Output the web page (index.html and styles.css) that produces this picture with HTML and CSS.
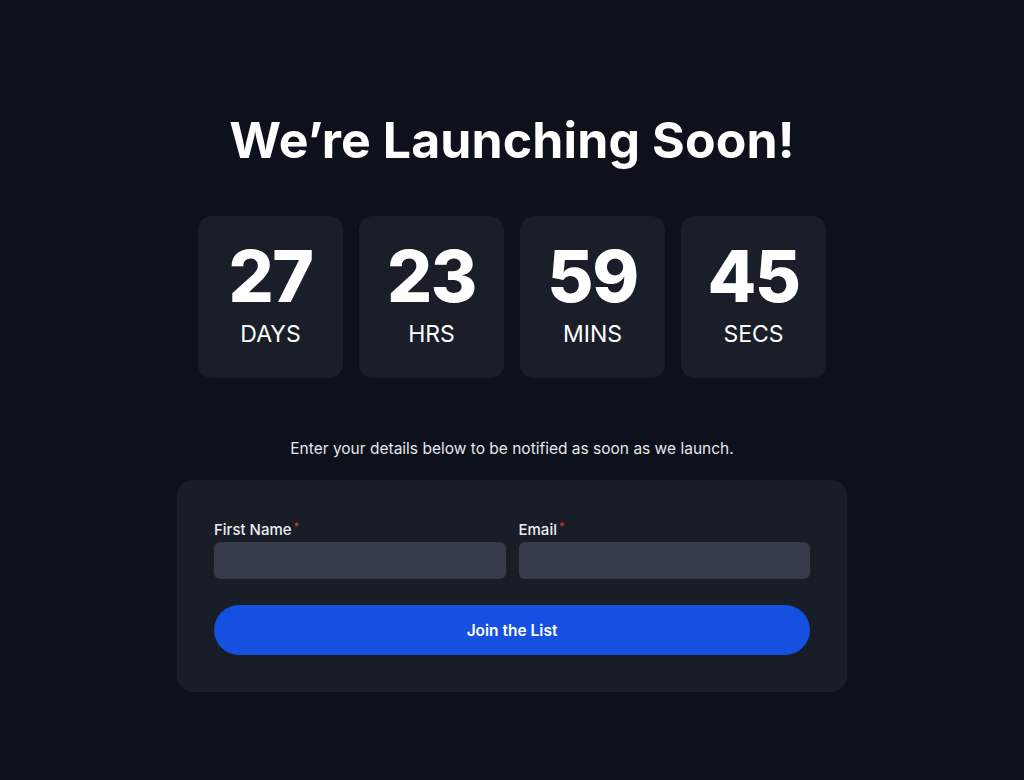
FILE: index.html
```html
<!DOCTYPE html>
<html lang="en">
<head>
<meta charset="utf-8">
<title>We're Launching Soon!</title>
<link rel="stylesheet" href="styles.css">
</head>
<body>
<main class="page">
  <h1 class="title">We’re Launching Soon!</h1>
  <div class="countdown">
    <div class="unit"><span class="num">27</span><span class="label">DAYS</span></div>
    <div class="unit"><span class="num">23</span><span class="label">HRS</span></div>
    <div class="unit"><span class="num">59</span><span class="label">MINS</span></div>
    <div class="unit"><span class="num">45</span><span class="label">SECS</span></div>
  </div>
  <p class="lead">Enter your details below to be notified as soon as we launch.</p>
  <form class="card">
    <div class="fields">
      <label class="field">
        <span class="field-label">First Name<sup class="req">*</sup></span>
        <input class="input" type="text">
      </label>
      <label class="field">
        <span class="field-label">Email<sup class="req">*</sup></span>
        <input class="input" type="email">
      </label>
    </div>
    <button class="btn" type="button">Join the List</button>
  </form>
</main>
</body>
</html>
```

FILE: styles.css
```css
* { box-sizing: border-box; }
html, body { margin: 0; padding: 0; }
body {
  background: #0c111b;
  color: #ffffff;
  font-family: Inter, "Noto Sans", sans-serif;
  width: 1024px;
  height: 780px;
  overflow: hidden;
}
.page {
  display: flex;
  flex-direction: column;
  align-items: center;
  padding-top: 108px;
}
.title {
  margin: 0;
  font-size: 50px;
  font-weight: 700;
  line-height: 64px;
  letter-spacing: 0.1px;
}
.countdown {
  display: flex;
  gap: 16px;
  margin-top: 44px;
}
.unit {
  width: 145px;
  height: 162px;
  background: #191e29;
  border-radius: 14px;
  display: flex;
  flex-direction: column;
  align-items: center;
  padding-top: 24px;
}
.num {
  font-size: 71px;
  font-weight: 800;
  line-height: 72px;
  letter-spacing: -1.5px;
}
.label {
  font-size: 23px;
  font-weight: 400;
  line-height: 28px;
  margin-top: 8px;
}
.lead {
  margin: 61px 0 0;
  font-size: 15.5px;
  line-height: 20px;
  color: #e6e7ea;
}
.card {
  margin-top: 21px;
  width: 670px;
  background: #191d28;
  border-radius: 16px;
  padding: 39px 37px 37px;
}
.fields {
  display: flex;
  gap: 13px;
}
.field {
  flex: 1;
  display: flex;
  flex-direction: column;
  gap: 2px;
}
.field-label {
  font-size: 15px;
  line-height: 21px;
  color: #eceef1;
  font-weight: 500;
}
.req {
  color: #d6332f;
  font-size: 11px;
  vertical-align: top;
  line-height: 14px;
  margin-left: 2px;
}
.input {
  height: 37px;
  border: none;
  border-radius: 6px;
  background: #363b49;
  outline: none;
}
.btn {
  margin-top: 26px;
  width: 100%;
  height: 50px;
  border: none;
  border-radius: 25px;
  background: #1650e1;
  color: #ffffff;
  font-family: inherit;
  font-size: 15.5px;
  font-weight: 600;
}
```
